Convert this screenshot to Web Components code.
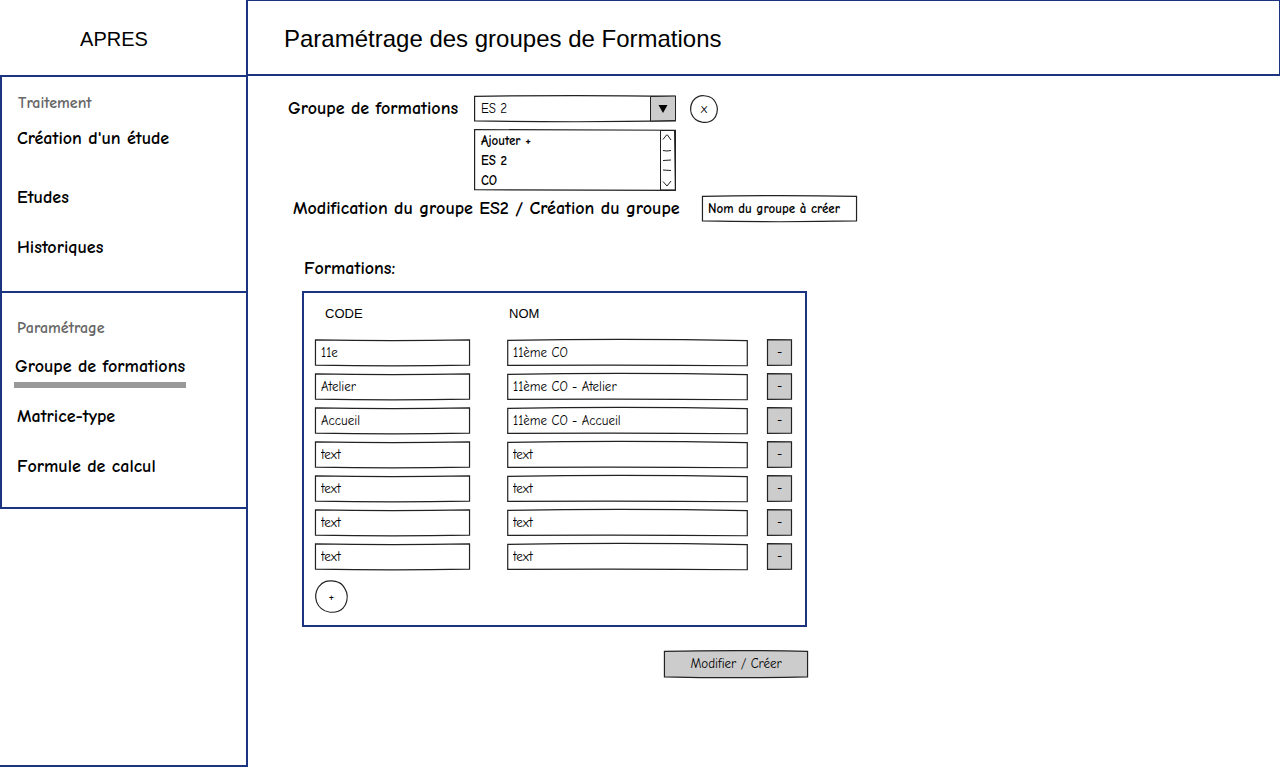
<!DOCTYPE html>
<html lang="fr">
<head>
<meta charset="utf-8">
<title>Paramétrage des groupes de Formations</title>
<style>
  body { margin: 0; background: #fff; color: #000; font: 13px/20px "Comic Sans MS", "Comic Neue", "Noto Sans", sans-serif;
    --navy: #1c3380; --grey: #ccc; --ui: "Liberation Sans", Arial, sans-serif; }
</style>
</head>
<body>
<app-shell>
  <app-brand slot="brand">APRES</app-brand>
  <nav-section slot="nav" heading="Traitement">
    <nav-item class="wide">Création d'un étude</nav-item>
    <nav-item>Etudes</nav-item>
    <nav-item>Historiques</nav-item>
  </nav-section>
  <nav-section slot="nav" heading="Paramétrage">
    <nav-item current>Groupe de formations</nav-item>
    <nav-item>Matrice-type</nav-item>
    <nav-item>Formule de calcul</nav-item>
  </nav-section>
  <span slot="title">Paramétrage des groupes de Formations</span>
  <group-form></group-form>
</app-shell>

<script>
  const define = (name, html, setup) => {
    const template = document.createElement('template');
    template.innerHTML = html;
    customElements.define(name, class extends HTMLElement {
      static observedAttributes = ['shape', 'label', 'value'];
      constructor() {
        super();
        this.attachShadow({ mode: 'open' }).append(template.content.cloneNode(true));
      }
      connectedCallback() { if (setup) setup(this, this.shadowRoot); }
      attributeChangedCallback() { if (this.isConnected) this.connectedCallback(); }
    });
  };

  /* Hand-drawn outline stacked under the slotted control. */
  const outlines = {
    sag:   'M.3 3 Q50 9 99.7 3 L99.7 97 Q50 102 .3 97 Z',
    arch:  'M.3 5 Q50 -3 99.7 6 L99.7 99 Q50 95 .3 98 Z',
    swell: 'M.3 5 Q50 -1 99.7 5 L99.7 96 Q50 102 .3 96 Z',
    sheet: 'M.3 1 L99.700 2 L99.700 99 L.3 98 Z',
    flat:  'M2 2 L98 3 L98 97 L2 98 Z',
    round: 'M31 5 C40 1 60 2 71 7 C86 12 92 27 96 38 C101 54 95 75 85 85 C74 96 57 99 43 97 C25 94 12 84 5 67 C0 52 3 34 10 22 C16 13 23 8 31 5 Z'
  };
  define('sketch-frame', `
    <style>
      :host { display: grid; height: 27px; }
      svg, .content { grid-area: 1 / 1; min-width: 0; min-height: 0; }
      svg { width: 100%; height: 100%; overflow: visible; }
      path { fill: var(--fill, #fff); stroke: #222; stroke-width: 1.2; vector-effect: non-scaling-stroke; }
      .content { display: grid; z-index: 1; }
    </style>
    <svg viewBox="0 0 100 100" preserveAspectRatio="none" aria-hidden="true"><path/></svg>
    <div class="content"><slot></slot></div>`,
    (host, root) => root.querySelector('path').setAttribute('d', outlines[host.getAttribute('shape') || 'flat']));

  define('sketch-field', `
    <style>
      :host { display: block; }
      input { box-sizing: border-box; width: 100%; height: 100%; border: 0; outline: 0; padding: 0 6px; background: none;
        color: #000; font: inherit; }
    </style>
    <sketch-frame><input type="text"></sketch-frame>`,
    (host, root) => {
      root.querySelector('sketch-frame').setAttribute('shape', host.getAttribute('shape') || 'sag');
      const input = root.querySelector('input');
      input.value = host.getAttribute('value');
      input.setAttribute('aria-label', host.getAttribute('label'));
    });

  define('sketch-button', `
    <style>
      :host { display: block; --fill: var(--grey); }
      :host([shape=round]) { --fill: #fff; }
      sketch-frame { height: 100%; }
      button { border: 0; padding: 0; background: none; color: #000; font: inherit; cursor: pointer; }
    </style>
    <sketch-frame><button type="button"><slot></slot></button></sketch-frame>`,
    (host, root) => {
      root.querySelector('sketch-frame').setAttribute('shape', host.getAttribute('shape') || 'flat');
      if (host.hasAttribute('label')) root.querySelector('button').setAttribute('aria-label', host.getAttribute('label'));
    });

  define('app-shell', `
    <style>
      :host { display: grid; grid-template-columns: 248px minmax(0, 1fr); min-height: calc(100vh - 1px); }
      aside { border: solid var(--navy); border-width: 0 2px 2px 0; }
      header { display: flex; align-items: center; box-sizing: border-box; height: 76px; padding: 2px 36px 0;
        border: solid var(--navy); border-width: 1px 1px 2px 0; font: 24px/32px var(--ui); }
      h1 { margin: 0; font: inherit; }
      main { padding: 19px 40px; }
    </style>
    <aside><slot name="brand"></slot><nav><slot name="nav"></slot></nav></aside>
    <div><header><h1><slot name="title"></slot></h1></header><main><slot></slot></main></div>`);

  define('app-brand', `
    <style>
      :host { display: flex; align-items: center; justify-content: center; box-sizing: border-box; height: 75px;
        padding: 2px 18px 0 0; font: 20px/24px var(--ui); }
    </style><slot></slot>`);

  define('nav-section', `
    <style>
      :host { display: block; box-sizing: border-box; height: 216px; padding: 12px 12px 0; border: solid var(--navy); border-width: 2px 0 0 2px; }
      h2 { margin: 0 0 7px; padding: 0 4px; color: #666; font-size: 16px; font-weight: 700; line-height: 28px; }
      :host(:last-of-type) { height: 218px; padding-top: 21px; border-bottom-width: 2px; }
      :host(:last-of-type) h2 { margin-bottom: 10px; padding: 0 3px; }
    </style>
    <h2></h2><slot></slot>`,
    (host, root) => { root.querySelector('h2').textContent = host.getAttribute('heading'); });

  define('nav-item', `
    <style>
      :host { display: block; height: 50px; font-size: 18px; font-weight: 700; line-height: 30px; }
      :host(.wide) { height: 59px; }
      a { display: inline-block; padding: 0 3px; color: inherit; text-decoration: none; }
      :host([current]) a { padding: 0 1px; border-bottom: 6px solid #999; }
    </style>
    <a href="#"><slot></slot></a>`);

  define('combo-box', `
    <style>
      :host { display: block; }
      .row { display: grid; grid-template-columns: minmax(0, 1fr) 26px; height: 100%; }
      select { appearance: none; grid-area: 1 / 1 / 2 / 3; border: 0; outline: 0; padding: 0 7px; background: none; color: #000; font: inherit; }
      svg { grid-area: 1 / 2; width: 26px; height: 27px; pointer-events: none; }
    </style>
    <sketch-frame shape="swell">
      <div class="row">
        <select aria-label="Groupe de formations"><option>ES 2</option></select>
        <svg viewBox="0 0 26 27" aria-hidden="true"><path d="M.5 1.5 L25.5 1 V25.5 L.5 26 Z" fill="#ccc" stroke="#222"/><path d="M8.500 10 H17.500 L13 18 Z"/></svg>
      </div>
    </sketch-frame>`);

  define('list-box', `
    <style>
      :host { display: block; }
      sketch-frame { height: 62px; }
      .row { display: grid; grid-template-columns: minmax(0, 1fr) 16px; height: 62px; }
      select { border: 0; outline: 0; margin: 2px 0 0; padding: 0; height: 60px; background: none; color: #000; font: inherit; font-weight: 700; overflow: hidden; scrollbar-width: none; }
      option { box-sizing: border-box; height: 20px; min-height: 20px; padding: 2px 7px 0; font-weight: 700; }
      svg { width: 16px; height: 62px; }
    </style>
    <sketch-frame shape="sheet">
      <div class="row">
        <select size="3" aria-label="Choix du groupe"><option>Ajouter +</option><option>ES 2</option><option>CO</option></select>
        <svg viewBox="0 0 16 62" fill="none" stroke="#222" aria-hidden="true">
          <path d="M.5 1 V61.500 M14.500 1.500 L15.500 61 M.5 1.500 H15 M.5 61 H15"/>
          <path d="M3 10.500 L6.500 6 L7.500 6 L11 11 M3 21.500 Q7 22.500 11 21.500 M3 31.500 L11 31 M3 41 L11 41.500 M3 52.500 L7 57 L11 52"/>
        </svg>
      </div>
    </sketch-frame>`);

  const rows = [['11e', '11ème CO'], ['Atelier', '11ème CO - Atelier'], ['Accueil', '11ème CO - Accueil'],
    ['text', 'text'], ['text', 'text'], ['text', 'text'], ['text', 'text']];
  define('formation-table', `
    <style>
      :host { display: block; box-sizing: border-box; max-width: 505px; padding: 0 13px 12px 11px; border: 2px solid var(--navy); }
      table { width: 100%; border-collapse: collapse; table-layout: fixed; }
      th { height: 42px; padding: 0 0 0 10px; text-align: left; font: 13px/20px var(--ui); }
      th + th { padding-left: 2px; }
      td { height: 34px; padding: 0; }
      .code { width: 192px; } .del { width: 25px; }
      td:nth-child(1) { padding-right: 37px; }
      td:nth-child(2) { padding-right: 19px; }
      td sketch-button { height: 27px; }
      .add { width: 33px; height: 33px; margin-top: 7px; }
    </style>
    <table>
      <colgroup><col class="code"><col><col class="del"></colgroup>
      <thead><tr><th scope="col">CODE</th><th scope="col">NOM</th><td></td></tr></thead>
      <tbody>${rows.map(([code, name], i) => `
        <tr><td><sketch-field label="Code ${i + 1}" value="${code}"></sketch-field></td>
        <td><sketch-field shape="arch" label="Nom ${i + 1}" value="${name}"></sketch-field></td>
        <td><sketch-button>-</sketch-button></td></tr>`).join('')}
      </tbody>
    </table>
    <sketch-button class="add" shape="round">+</sketch-button>`);

  define('group-form', `
    <style>
      :host { display: block; }
      .pick { display: grid; grid-template-columns: 186px 202px 42px; row-gap: 6px; }
      .pick sketch-button { width: 28px; height: 28px; margin-left: 14px; }
      list-box { grid-column: 2; }
      .label { font-size: 18px; font-weight: 700; line-height: 28px; white-space: nowrap; }
      .edit { display: grid; grid-template-columns: 409px 155px; margin: 4px 0 0 5px; }
      .edit .label { line-height: 27px; }
      .edit sketch-field { font-weight: 700; }
      h2 { margin: 33px 0 8px 16px; }
      .panel { max-width: 506px; margin-left: 14px; }
      .save { width: 144px; height: 28px; margin: 23px 0 0 auto; }
    </style>
    <form>
      <div class="pick">
        <span class="label">Groupe de formations</span>
        <combo-box></combo-box>
        <sketch-button shape="round">x</sketch-button>
        <list-box></list-box>
      </div>
      <div class="edit">
        <span class="label">Modification du groupe ES2 / Création du groupe</span>
        <sketch-field shape="swell" label="Nom du groupe" value="Nom du groupe à créer"></sketch-field>
      </div>
      <h2 class="label">Formations:</h2>
      <div class="panel">
        <formation-table></formation-table>
        <sketch-button class="save" shape="swell">Modifier / Créer</sketch-button>
      </div>
    </form>`);
</script>
</body>
</html>
